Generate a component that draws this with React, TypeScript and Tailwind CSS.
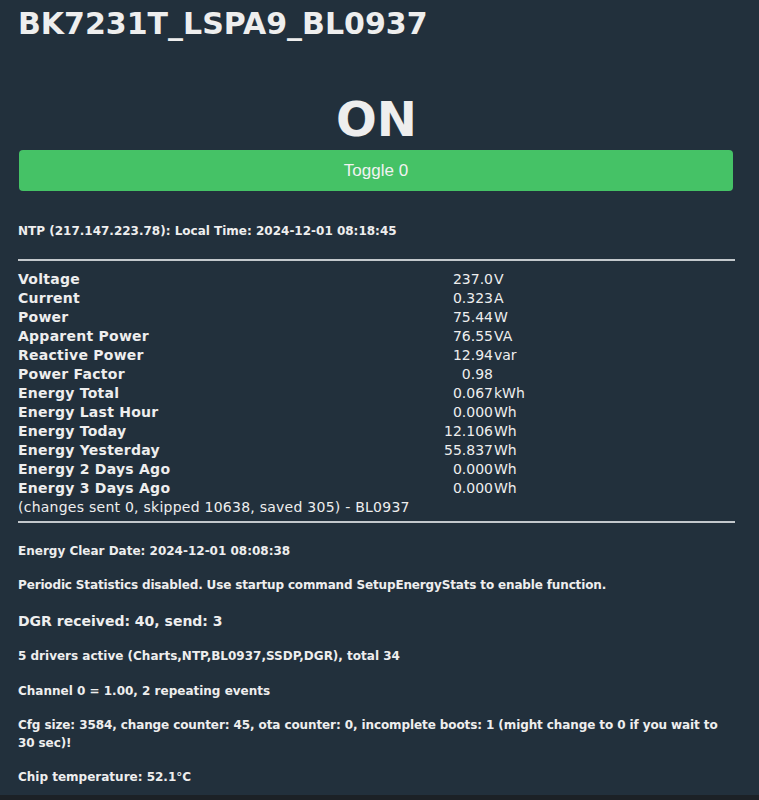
import React from "react"

const readings: [string, string, string][] = [
  ["Voltage", "237.0", "V"],
  ["Current", "0.323", "A"],
  ["Power", "75.44", "W"],
  ["Apparent Power", "76.55", "VA"],
  ["Reactive Power", "12.94", "var"],
  ["Power Factor", "0.98", ""],
  ["Energy Total", "0.067", "kWh"],
  ["Energy Last Hour", "0.000", "Wh"],
  ["Energy Today", "12.106", "Wh"],
  ["Energy Yesterday", "55.837", "Wh"],
  ["Energy 2 Days Ago", "0.000", "Wh"],
  ["Energy 3 Days Ago", "0.000", "Wh"],
]

export default function App() {
  return (
    <div className="flex h-[800px] flex-col overflow-hidden bg-[#22303c] font-['DejaVu_Sans',Verdana,sans-serif] text-[#eeeeee]">
      <main className="flex-1 pl-[18px] pr-[24px]">
        <h1 className="pt-[6px] text-[30px] font-bold leading-[36px]">BK7231T_LSPA9_BL0937</h1>

        <div className="mt-[49px] text-center text-[48px] font-bold leading-[56px]">ON</div>
        <div className="mt-[3px] pl-[1px] pr-[2px]">
          <button className="flex h-[41px] w-full items-center justify-center rounded-[4px] bg-[#45c266] font-['Liberation_Sans',Arial,sans-serif] text-[17px] text-[#f2f2f2]">
            Toggle 0
          </button>
        </div>

        <p className="mt-[31px] text-[12px] font-bold leading-[18px]">
          NTP (217.147.223.78): Local Time: 2024-12-01 08:18:45
        </p>

        <hr className="mt-[19px] border-0 border-t-2 border-[#c3c8cc]" />

        <div className="mt-[9px] grid grid-cols-[425px_50px_auto] text-[14px] leading-[19px]">
          {readings.map(([label, value, unit]) => (
            <React.Fragment key={label}>
              <span className="font-bold tracking-[0.25px]">{label}</span>
              <span className="text-right">{value}</span>
              <span className="pl-[1px]">{unit}</span>
            </React.Fragment>
          ))}
        </div>
        <p className="text-[14px] leading-[19px] tracking-[0.25px]">
          (changes sent 0, skipped 10638, saved 305) - BL0937
        </p>

        <hr className="mt-[4px] border-0 border-t-2 border-[#c3c8cc]" />

        <div className="text-[12px] font-bold leading-[18px]">
          <p className="mt-[19px]">Energy Clear Date: 2024-12-01 08:08:38</p>
          <p className="mt-[16px] tracking-[-0.15px]">
            Periodic Statistics disabled. Use startup command SetupEnergyStats to enable function.
          </p>
          <p className="mt-[17px] text-[14px] leading-[20px]">DGR received: 40, send: 3</p>
          <p className="mt-[16px]">5 drivers active (Charts,NTP,BL0937,SSDP,DGR), total 34</p>
          <p className="mt-[17px]">Channel 0 = 1.00, 2 repeating events</p>
          <p className="mt-[16px] tracking-[-0.1px]">
            Cfg size: 3584, change counter: 45, ota counter: 0, incomplete boots: 1 (might change to 0 if you wait to
            <br />
            30 sec)!
          </p>
          <p className="mt-[16px]">Chip temperature: 52.1°C</p>
        </div>
      </main>
      <div className="h-[5px] bg-[#1c2126]" />
    </div>
  )
}
